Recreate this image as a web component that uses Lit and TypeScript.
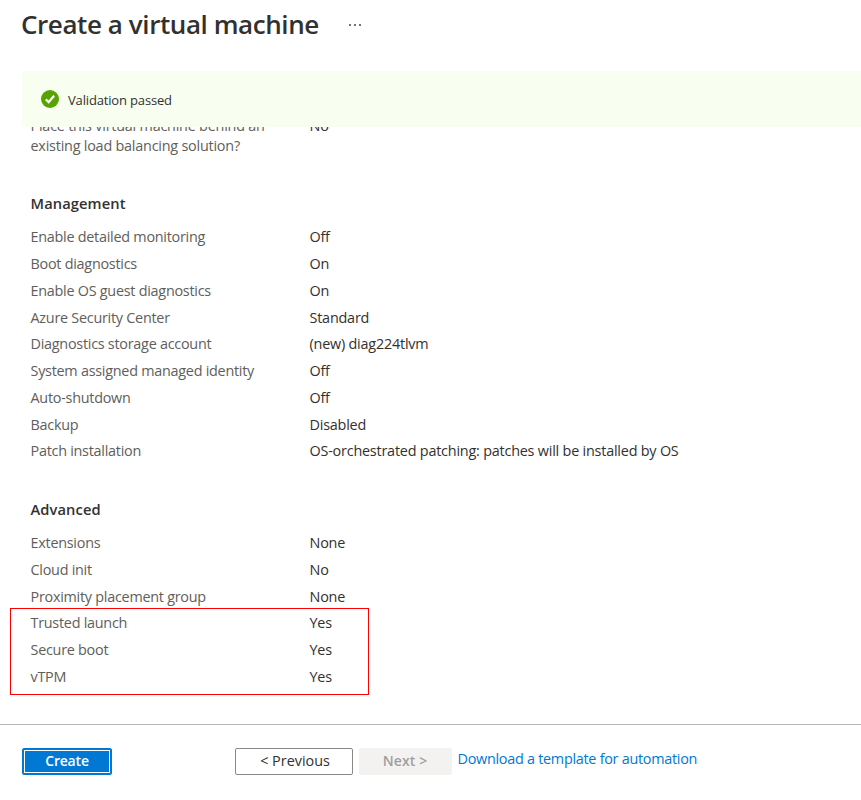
import { LitElement, html, css } from "lit";
import { customElement, property } from "lit/decorators.js";

type Row = [label: string, value: string];

const management: Row[] = [
  ["Enable detailed monitoring", "Off"],
  ["Boot diagnostics", "On"],
  ["Enable OS guest diagnostics", "On"],
  ["Azure Security Center", "Standard"],
  ["Diagnostics storage account", "(new) diag224tlvm"],
  ["System assigned managed identity", "Off"],
  ["Auto-shutdown", "Off"],
  ["Backup", "Disabled"],
  ["Patch installation", "OS-orchestrated patching: patches will be installed by OS"],
];

const advanced: Row[] = [
  ["Extensions", "None"],
  ["Cloud init", "No"],
  ["Proximity placement group", "None"],
];

const security: Row[] = [
  ["Trusted launch", "Yes"],
  ["Secure boot", "Yes"],
  ["vTPM", "Yes"],
];

@customElement("summary-rows")
class SummaryRows extends LitElement {
  @property({ attribute: false }) rows: Row[] = [];

  static styles = css`
    :host { display: block; }
    .row {
      display: grid;
      grid-template-columns: 279px 1fr;
      height: 26.75px;
      line-height: 26.75px;
      white-space: nowrap;
    }
    .label { color: #605e5c; letter-spacing: -0.26px; }
    .value { color: #323130; }
  `;

  render() {
    return this.rows.map(
      ([label, value]) => html`<div class="row">
        <span class="label">${label}</span><span class="value">${value}</span>
      </div>`
    );
  }
}

@customElement("app-root")
class AppRoot extends LitElement {
  static styles = css`
    :host {
      display: flex;
      flex-direction: column;
      height: 800px;
      overflow: hidden;
      background: #fff;
      color: #323130;
      font: 14.4px "Open Sans", "Noto Sans", sans-serif;
      letter-spacing: -0.21px;
    }
    * { box-sizing: border-box; }
    header {
      display: flex;
      align-items: center;
      gap: 30px;
      height: 71px;
      padding: 0 0 21px 21px;
    }
    h1 {
      margin: -2px 0 0;
      font-size: 26px;
      font-weight: 600;
      letter-spacing: -0.42px;
      line-height: 50px;
      white-space: nowrap;
    }
    .more { display: block; }
    .banner {
      display: flex;
      align-items: center;
      flex: none;
      gap: 9px;
      height: 56px;
      margin-left: 22px;
      padding: 1px 0 0 19px;
      border-radius: 2px 0 0 2px;
      background: #f8fff0;
      font-size: 13px;
      letter-spacing: -0.16px;
    }
    .banner svg { margin-top: -1px; }
    .content {
      flex: 1;
      min-height: 0;
      overflow: hidden;
      padding-left: 30.5px;
    }
    .clipped {
      display: grid;
      grid-template-columns: 279px 1fr;
      line-height: 20px;
      margin-top: -11px;
      height: 40px;
      white-space: nowrap;
    }
    .label { color: #605e5c; letter-spacing: -0.22px; }
    h2 {
      margin: 0;
      font-size: 14.7px;
      font-weight: 600;
      line-height: 20px;
      letter-spacing: 0.1px;
    }
    .management { margin: 37px 0 11.3px; }
    .advanced { margin: 33.7px 0 11.3px; }
    .highlight {
      width: 359px;
      height: 87px;
      margin: -2.2px 0 0 -20.5px;
      padding: 1.15px 0 0 19.5px;
      border: 1px solid #f00;
    }
    footer {
      display: flex;
      align-items: flex-start;
      flex: none;
      height: 76px;
      padding: 23px 0 0 22px;
      border-top: 1px solid #b8b6b4;
    }
    button {
      height: 27px;
      padding: 0 0 2px;
      border: 1px solid #8a8886;
      border-radius: 2px;
      background: #fff;
      color: #323130;
      font: 600 14px "Open Sans", "Noto Sans", sans-serif;
      letter-spacing: -0.2px;
      line-height: 23px;
    }
    .create {
      width: 90px;
      margin-right: 123px;
      border-color: #0078d4;
      background: #0078d4;
      box-shadow: inset 0 0 0 1px #0078d4, inset 0 0 0 2px #fff;
      color: #fff;
    }
    .previous { width: 118px; margin-right: 6px; padding-left: 2px; font-weight: 500; font-size: 14.4px; letter-spacing: 0; }
    .next { width: 93px; margin-right: 5.5px; padding-right: 1px; border-color: #f3f2f1; background: #f3f2f1; color: #a19f9d; letter-spacing: 0.1px; }
    a { color: #0078d4; line-height: 22px; text-decoration: none; white-space: nowrap; letter-spacing: -0.27px; }
  `;

  render() {
    return html`
      <header>
        <h1>Create a virtual machine</h1>
        <svg class="more" width="12" height="4" viewBox="0 0 12 4" fill="#323130">
          <circle cx="1" cy="2" r="0.9" /><circle cx="6" cy="2" r="0.9" /><circle cx="11" cy="2" r="0.9" />
        </svg>
      </header>
      <div class="banner">
        <svg width="18" height="18" viewBox="0 0 18 18">
          <circle cx="9" cy="9" r="9" fill="#57a300" />
          <path d="M4.8 9.4 7.7 12.1 13.1 5.8" fill="none" stroke="#fff" stroke-width="2.2" />
        </svg>
        <span>Validation passed</span>
      </div>
      <div class="content">
        <div class="clipped">
          <span class="label">Place this virtual machine behind an<br />existing load balancing solution?</span>
          <span>No</span>
        </div>
        <h2 class="management">Management</h2>
        <summary-rows .rows=${management}></summary-rows>
        <h2 class="advanced">Advanced</h2>
        <summary-rows .rows=${advanced}></summary-rows>
        <div class="highlight"><summary-rows .rows=${security}></summary-rows></div>
      </div>
      <footer>
        <button class="create">Create</button>
        <button class="previous">&lt; Previous</button>
        <button class="next" disabled>Next &gt;</button>
        <a href="#">Download a template for automation</a>
      </footer>
    `;
  }
}
